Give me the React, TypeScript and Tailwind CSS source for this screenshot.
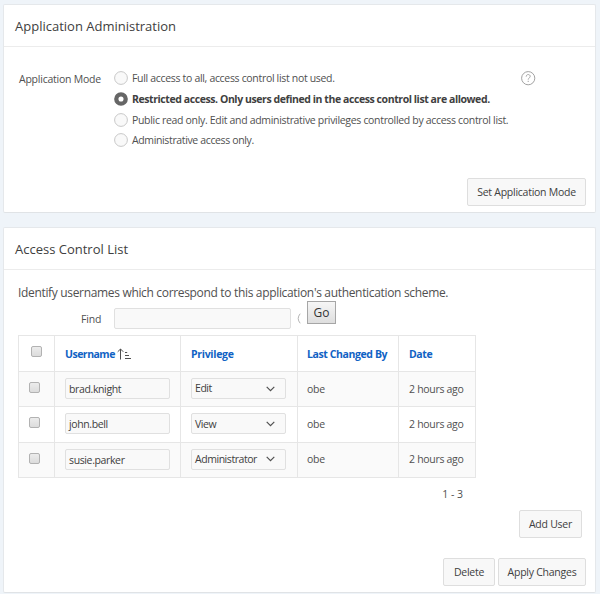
import type { ReactNode } from "react";

const modes = [
  { label: "Full access to all, access control list not used.", style: "tracking-[-0.32px]" },
  {
    label: "Restricted access. Only users defined in the access control list are allowed.",
    style: "tracking-[-0.42px] font-bold text-[#404040]",
  },
  {
    label: "Public read only. Edit and administrative privileges controlled by access control list.",
    style: "tracking-[-0.32px]",
  },
  { label: "Administrative access only.", style: "tracking-[-0.36px]" },
];

const users = [
  { name: "brad.knight", privilege: "Edit" },
  { name: "john.bell", privilege: "View" },
  { name: "susie.parker", privilege: "Administrator" },
];

function Button({ className, children }: { className: string; children: ReactNode }) {
  return (
    <button
      className={`flex h-[28px] items-center justify-center whitespace-nowrap rounded-[2px] border border-[#dedede] bg-[#f8f8f8] pt-px tracking-[-0.25px] text-[#404040] ${className}`}
    >
      {children}
    </button>
  );
}

function Checkbox() {
  return (
    <span className="block size-[11px] rounded-[2px] border border-[#b2b2b2] bg-linear-to-b from-[#ececec] to-[#dcdcdc]" />
  );
}

function Radio({ selected }: { selected: boolean }) {
  return (
    <svg className="size-[14px] shrink-0" viewBox="0 0 14 14" fill="none">
      {selected ? (
        <circle cx="7" cy="7" r="4.7" stroke="#666" strokeWidth="4.3" />
      ) : (
        <circle cx="7" cy="7" r="6.4" fill="#f9f9f9" stroke="#c8c8c8" />
      )}
    </svg>
  );
}

function SortIcon() {
  return (
    <svg className="-mt-[2px] ml-[2px] h-[12px] w-[15px]" viewBox="0 0 15 12" fill="none" stroke="#505050">
      <path d="M3.5 11.5V1M.7 3.8 3.5 1l2.8 2.8" />
      <path d="M8 4.5h2.2M8 7.5h4M8 10.5h6" />
    </svg>
  );
}

function Chevron() {
  return (
    <svg className="h-[6px] w-[9px] shrink-0" viewBox="0 0 9 6" fill="none" stroke="#505050" strokeWidth="1.2">
      <path d="M.7.9 4.5 4.6 8.3.9" />
    </svg>
  );
}

export default function App() {
  return (
    <div className="flex h-[594px] w-[600px] flex-col overflow-hidden bg-[#eff4f9] pl-[3px] pr-[4px] pt-[4px] font-['Open_Sans','Noto_Sans',sans-serif] text-[10.5px] tracking-[-0.3px] text-[#505050]">
      <section className="flex h-[209px] shrink-0 flex-col rounded-[2px] border border-[#e5e8eb] border-b-[#e0e3e6] bg-white">
        <h2 className="h-[42px] border-b border-[#ececec] pl-[11px] text-[13px] leading-[43px] tracking-normal text-[#404040]">
          Application Administration
        </h2>
        <div className="flex pt-[21px]">
          <span className="w-[110px] shrink-0 whitespace-nowrap pl-[15px] leading-[22px] tracking-[-0.23px]">
            Application Mode
          </span>
          <div className="w-[414px] shrink-0">
            {modes.map(({ label, style }, i) => (
              <label key={label} className="flex h-[20.67px] items-center gap-[4px] whitespace-nowrap">
                <Radio selected={i === 1} />
                <span className={`pt-[2px] ${style}`}>{label}</span>
              </label>
            ))}
          </div>
          <svg className="-ml-[7px] mt-[3px] size-[15px] shrink-0" viewBox="0 0 15 15" fill="none" stroke="#a2a2a2">
            <circle cx="7.2" cy="7.2" r="6.6" />
            <path d="M5.2 5.6c0-2.7 4-2.7 4-.2 0 1.5-2 1.6-2 3.2M7.2 9.8v1.2" />
          </svg>
        </div>
        <div className="mt-auto flex justify-end pb-[6px] pr-[9px]">
          <Button className="w-[119px]">Set Application Mode</Button>
        </div>
      </section>

      <section className="mt-[14px] flex h-[366px] shrink-0 flex-col rounded-[2px] border border-[#e5e8eb] border-b-[#e0e3e6] bg-white">
        <h2 className="h-[42px] border-b border-[#ececec] pl-[11px] text-[13px] leading-[43px] tracking-normal text-[#404040]">
          Access Control List
        </h2>
        <p className="h-[31px] whitespace-nowrap pl-[14px] pt-[13px] text-[12px] leading-[20px] tracking-[-0.33px]">
          Identify usernames which correspond to this application's authentication scheme.
        </p>
        <div className="flex h-[34px]">
          <span className="w-[110px] shrink-0 pl-[77px] pt-[10px] leading-[17px] tracking-[-0.2px]">Find</span>
          <span className="mt-[7px] h-[21px] w-[177px] rounded-[2px] border border-[#e0e0e0] bg-[#f9f9f9]" />
          <svg className="ml-[6px] mt-[12px] h-[11px] w-[4px]" viewBox="0 0 4 11" fill="none" stroke="#b4b4b4">
            <path d="M3.2.7Q-.8 5.5 3.2 10.3" />
          </svg>
          <button className="ml-[6px] flex h-[23px] w-[29px] items-center justify-center border border-[#a6a6a6] bg-linear-to-b from-[#f6f6f6] to-[#dedede] text-[12px] tracking-normal text-[#333]">
            Go
          </button>
        </div>

        <table className="ml-[14px] w-[457px] table-fixed border-collapse text-left">
          <colgroup>
            <col className="w-[36px]" />
            <col className="w-[126px]" />
            <col className="w-[117px]" />
            <col className="w-[101px]" />
            <col className="w-[77px]" />
          </colgroup>
          <thead>
            <tr className="h-[36px] tracking-[-0.4px] text-[#1062c4] [&>th]:border [&>th]:border-[#e6e6e6] [&>th]:p-0 [&>th]:font-bold">
              <th>
                <div className="-mt-[5px] ml-[12px]"><Checkbox /></div>
              </th>
              <th>
                <div className="flex items-center pl-[10px] pt-[2px]">
                  <span className="tracking-[-0.5px]">Username</span>
                  <SortIcon />
                </div>
              </th>
              <th><div className="pl-[10px] pt-[2px] tracking-[-0.3px]">Privilege</div></th>
              <th><div className="pl-[9px] pt-[2px]">Last Changed By</div></th>
              <th><div className="pl-[10px] pt-[2px]">Date</div></th>
            </tr>
          </thead>
          <tbody>
            {users.map(({ name, privilege }) => (
              <tr
                key={name}
                className="h-[35.33px] odd:bg-[#fafafa] [&>td]:border [&>td]:border-[#e6e6e6] [&>td]:p-0"
              >
                <td>
                  <div className="-mt-[3px] ml-[10px]"><Checkbox /></div>
                </td>
                <td>
                  <div className="-mt-px ml-[10px] h-[21px] w-[105px] rounded-[2px] border border-[#e0e0e0] bg-[#f9f9f9] pl-[3px] leading-[20px] tracking-[-0.37px] text-[#404040]">
                    {name}
                  </div>
                </td>
                <td>
                  <div className="-mt-px ml-[10px] flex h-[21px] w-[95px] items-center justify-between rounded-[2px] border border-[#e0e0e0] bg-[#f9f9f9] pl-[3px] pr-[10px] tracking-[-0.45px] text-[#404040]">
                    <span className="pt-px">{privilege}</span>
                    <Chevron />
                  </div>
                </td>
                <td><div className="pl-[9px] pt-px">obe</div></td>
                <td><div className="whitespace-nowrap pl-[10px] pt-px">2 hours ago</div></td>
              </tr>
            ))}
          </tbody>
        </table>

        <div className="w-[459px] pt-[8px] text-right leading-[17px] tracking-normal">1 - 3</div>
        <div className="mt-auto flex justify-end pr-[13px]">
          <Button className="w-[63px]">Add User</Button>
        </div>
        <div className="flex justify-end gap-[3px] pb-[6px] pr-[9px] pt-[20px]">
          <Button className="w-[52px]">Delete</Button>
          <Button className="w-[88px]">Apply Changes</Button>
        </div>
      </section>
    </div>
  );
}
